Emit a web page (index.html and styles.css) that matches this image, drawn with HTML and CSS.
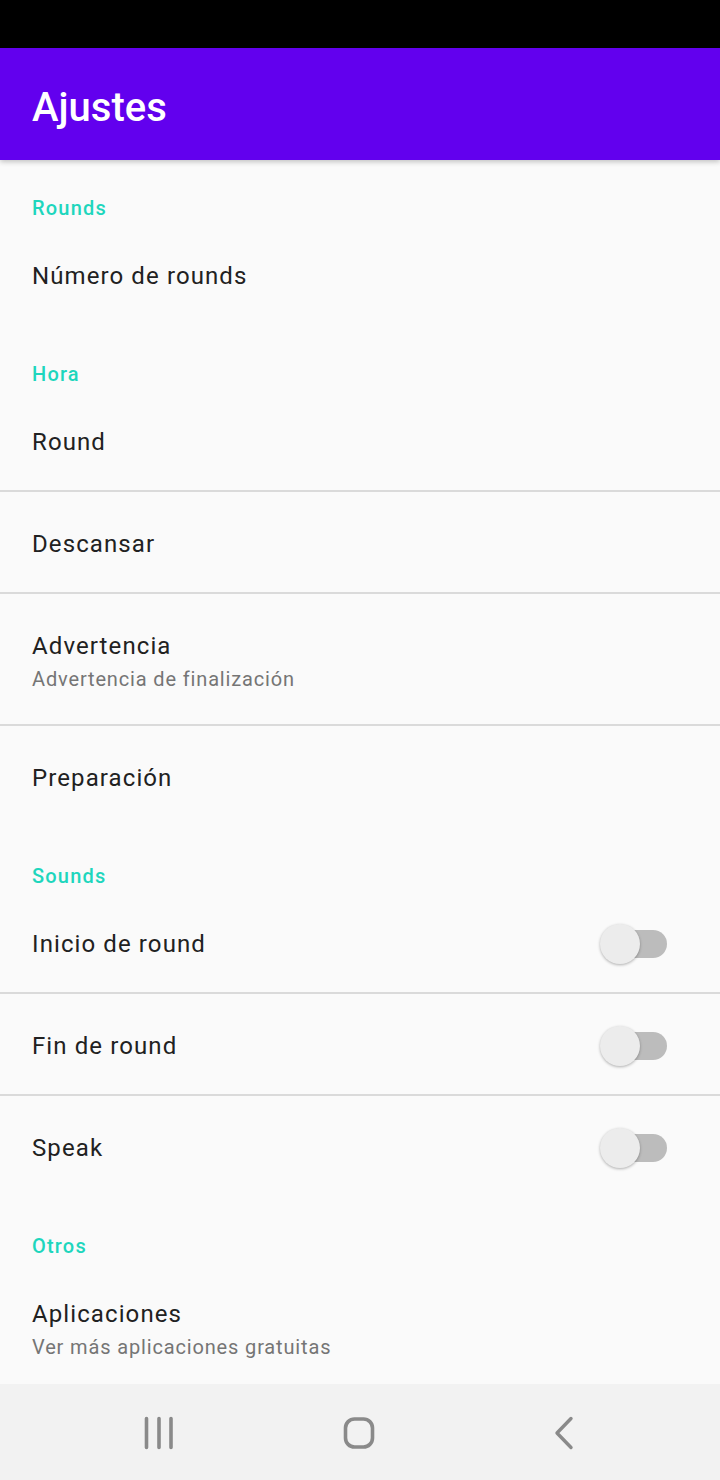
FILE: index.html
```html
<!DOCTYPE html>
<html lang="es">
<head>
    <meta charset="UTF-8">
    <meta name="viewport" content="width=device-width, initial-scale=1.0">
    <title>Ajustes</title>
    <link rel="stylesheet" href="styles.css">
</head>
<body>
    <div class="status-bar"></div>

    <header class="toolbar">
        <h1>Ajustes</h1>
    </header>

    <main class="prefs">
        <div class="category">Rounds</div>
        <div class="pref">
            <div class="pref-text"><div class="pref-title">Número de rounds</div></div>
        </div>

        <div class="category">Hora</div>
        <div class="pref">
            <div class="pref-text"><div class="pref-title">Round</div></div>
        </div>
        <div class="divider"></div>
        <div class="pref">
            <div class="pref-text"><div class="pref-title">Descansar</div></div>
        </div>
        <div class="divider"></div>
        <div class="pref pref-two">
            <div class="pref-text">
                <div class="pref-title">Advertencia</div>
                <div class="pref-summary">Advertencia de finalización</div>
            </div>
        </div>
        <div class="divider"></div>
        <div class="pref">
            <div class="pref-text"><div class="pref-title">Preparación</div></div>
        </div>

        <div class="category">Sounds</div>
        <div class="pref">
            <div class="pref-text"><div class="pref-title">Inicio de round</div></div>
            <div class="switch"><div class="track"></div><div class="thumb"></div></div>
        </div>
        <div class="divider"></div>
        <div class="pref">
            <div class="pref-text"><div class="pref-title">Fin de round</div></div>
            <div class="switch"><div class="track"></div><div class="thumb"></div></div>
        </div>
        <div class="divider"></div>
        <div class="pref">
            <div class="pref-text"><div class="pref-title">Speak</div></div>
            <div class="switch"><div class="track"></div><div class="thumb"></div></div>
        </div>

        <div class="category">Otros</div>
        <div class="pref pref-two">
            <div class="pref-text">
                <div class="pref-title">Aplicaciones</div>
                <div class="pref-summary">Ver más aplicaciones gratuitas</div>
            </div>
        </div>
    </main>

    <nav class="nav-bar">
        <div class="nav-btn">
            <svg width="40" height="40" viewBox="0 0 40 40">
                <path d="M7.5 5.5v29M20 5.5v29M32 5.5v29" stroke="#8a8a8a" stroke-width="3.6" stroke-linecap="round" fill="none"/>
            </svg>
        </div>
        <div class="nav-btn">
            <svg width="40" height="40" viewBox="0 0 40 40">
                <rect x="6.5" y="6" width="27" height="28" rx="9" stroke="#8a8a8a" stroke-width="3.6" fill="none"/>
            </svg>
        </div>
        <div class="nav-btn nav-back">
            <svg width="40" height="40" viewBox="0 0 40 40">
                <path d="M29 5.5L15 20L29 34.5" stroke="#8a8a8a" stroke-width="3.4" stroke-linecap="round" stroke-linejoin="round" fill="none"/>
            </svg>
        </div>
    </nav>
</body>
</html>
```

FILE: styles.css
```css
body {
    margin: 0;
    padding: 0;
    height: 100vh;
    display: flex;
    flex-direction: column;
    background-color: #fafafa;
    font-family: Roboto, "Liberation Sans", sans-serif;
    overflow: hidden;
}

.status-bar {
    height: 48px;
    background-color: #000;
    flex-shrink: 0;
}

.toolbar {
    height: 112px;
    flex-shrink: 0;
    box-sizing: border-box;
    background-color: #6200ee;
    display: flex;
    align-items: center;
    padding: 8px 0 0 32px;
    box-shadow: 0 2px 5px rgba(0, 0, 0, 0.22);
    position: relative;
    z-index: 1;
}

.toolbar h1 {
    margin: 0;
    color: #fff;
    font-size: 40px;
    font-weight: 500;
    line-height: 48px;
}

.prefs {
    flex: 1;
    overflow: hidden;
    display: flex;
    flex-direction: column;
}

.category {
    height: 66px;
    flex-shrink: 0;
    box-sizing: border-box;
    padding: 36px 0 0 32px;
    color: #1ed6bd;
    font-size: 20px;
    font-weight: 500;
    letter-spacing: 1.2px;
    line-height: 24px;
}

.pref {
    height: 100px;
    flex-shrink: 0;
    box-sizing: border-box;
    display: flex;
    align-items: center;
    padding: 0 53px 0 32px;
}

.pref-two {
    height: 130px;
    align-items: flex-start;
    padding-top: 34px;
}

.pref-text {
    flex: 1;
}

.pref-title {
    color: #212121;
    font-size: 24px;
    letter-spacing: 1.1px;
    line-height: 32px;
}

.pref-summary {
    color: #757575;
    font-size: 20px;
    letter-spacing: 0.85px;
    line-height: 32px;
    margin-top: 1px;
}

.divider {
    height: 2px;
    flex-shrink: 0;
    margin-top: -2px;
    margin-bottom: 2px;
    background-color: #dadada;
}

.switch {
    width: 67px;
    height: 40px;
    position: relative;
    display: flex;
    align-items: center;
}

.track {
    margin-left: 4px;
    width: 63px;
    height: 28px;
    border-radius: 14px;
    background-color: #bcbcbc;
}

.thumb {
    position: absolute;
    left: 0;
    top: 0;
    width: 40px;
    height: 40px;
    border-radius: 50%;
    background-color: #ececec;
    box-shadow: 0 1px 3px rgba(0, 0, 0, 0.3);
}

.nav-bar {
    height: 96px;
    flex-shrink: 0;
    background-color: #f2f2f2;
    display: flex;
    padding-left: 59px;
}

.nav-btn {
    width: 200px;
    display: flex;
    align-items: center;
    justify-content: center;
    padding-top: 1px;
}

.nav-back {
    padding-left: 3px;
}
```
